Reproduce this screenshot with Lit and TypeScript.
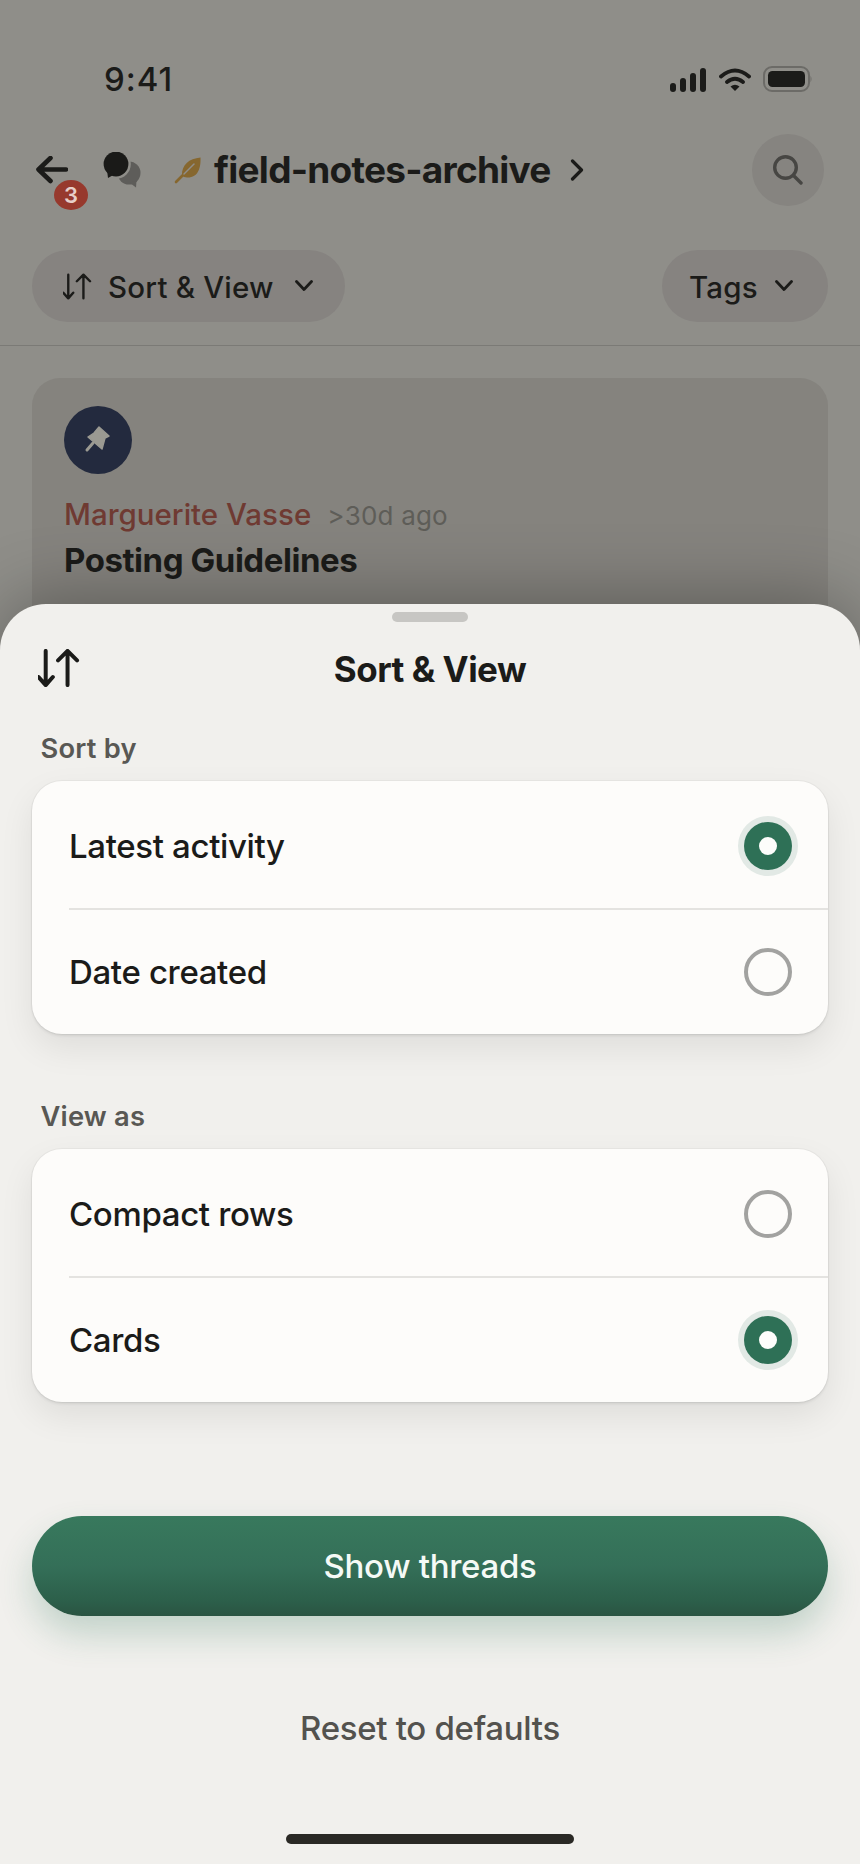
import { LitElement, html, css } from "lit";
import { customElement } from "lit/decorators.js";

const chevDown = html`<svg class="chev" viewBox="0 0 18 12" width="18" height="12"><path d="M1.5 1.5 9 9.5l7.5-8" fill="none" stroke="currentColor" stroke-width="2.8" stroke-linecap="round" stroke-linejoin="round"/></svg>`;

const sortIcon = (w: number, h: number, sw: number) => html`<svg viewBox="0 0 44 40" width=${w} height=${h}>
  <path d="M8 2v36M0.500 29.500 8 38l7.500-8.500M31 38V2M21 12 31 2l10 10" fill="none" stroke="currentColor" stroke-width=${sw} stroke-linecap="round" stroke-linejoin="round"/>
</svg>`;

@customElement("app-root")
export class AppRoot extends LitElement {
  static styles = css`
    :host {
      display: block;
      position: relative;
      width: 860px;
      height: 1864px;
      overflow: hidden;
      background: #8f8e89;
      font-family: Inter, "Liberation Sans", sans-serif;
      color: #1b1b19;
    }
    svg { display: block; flex: none; }
    .status {
      height: 60px;
      padding: 50px 47px 0 104px;
      display: flex;
      justify-content: space-between;
      align-items: center;
    }
    .time { font-size: 33px; font-weight: 550; letter-spacing: 1px; line-height: 60px; margin-top: -2px; }
    .status-icons { display: flex; align-items: flex-start; height: 30px; margin-top: 2px; }
    .signal { margin-right: 13px; margin-top: 2px; }
    .wifi { margin-right: 12px; margin-top: 2px; }
    .nav {
      margin-top: 24px;
      height: 72px;
      padding: 0 36px;
      display: flex;
      align-items: center;
    }
    .back { position: relative; width: 32px; height: 28px; margin-right: 35px; }
    .badge {
      position: absolute;
      left: 18px;
      top: 24px;
      width: 34px;
      height: 30px;
      border-radius: 50%;
      background: #97392d;
      color: #e7cfc9;
      font-size: 22px;
      font-weight: 600;
      line-height: 30px;
      text-align: center;
    }
    .bubbles { margin-right: 31px; }
    .leaf { margin-right: 12px; }
    .repo { font-size: 37px; font-weight: 650; letter-spacing: -0.75px; line-height: 44px; margin-right: 19px; }
    .search {
      margin-left: auto;
      width: 72px;
      height: 72px;
      border-radius: 50%;
      background: #868480;
      display: flex;
      align-items: center;
      justify-content: center;
    }
    .filters {
      margin-top: 44px;
      padding: 0 32px;
      display: flex;
      justify-content: space-between;
    }
    .chip {
      height: 72px;
      border-radius: 36px;
      background: #868380;
      display: flex;
      align-items: center;
      font-size: 29.500px;
      font-weight: 550;
      letter-spacing: 0.2px;
      line-height: 38px;
    }
    .chip .label { padding-top: 2px; }
    .chip.sort { width: 313px; padding-left: 31px; box-sizing: border-box; }
    .chip.sort .label { margin-left: 16px; margin-right: 21px; }
    .chip.tags { width: 166px; padding-left: 27px; box-sizing: border-box; }
    .chip.tags .label { margin-right: 17px; }
    .rule { margin-top: 23px; height: 1px; background: #7b7a76; }
    .thread {
      margin: 32px 32px 0;
      height: 300px;
      box-sizing: border-box;
      padding: 28px 32px;
      border-radius: 28px;
      background: #85837e;
    }
    .avatar {
      width: 68px;
      height: 68px;
      border-radius: 50%;
      background: #232a3e;
    }
    .meta { margin-top: 22px; display: flex; align-items: baseline; line-height: 36px; }
    .author { font-size: 29.500px; font-weight: 500; color: #6f3a32; margin-right: 16px; }
    .ago { font-size: 26px; font-weight: 400; color: #5e5d58; letter-spacing: 0.2px; }
    .title { font-size: 33px; font-weight: 650; line-height: 40px; margin-top: 6px; letter-spacing: -0.45px; }
    .sheet {
      position: absolute;
      left: 0;
      right: 0;
      top: 604px;
      bottom: 0;
      background: #f1f0ed;
      border-radius: 46px 46px 0 0;
      box-shadow: 0 -6px 70px rgba(0, 0, 0, 0.3);
      display: flex;
      flex-direction: column;
    }
    .grab { width: 76px; height: 10px; border-radius: 5px; background: #c7c6c3; margin: 8px auto 0; }
    .sheet-head { position: relative; height: 44px; margin-top: 25px; text-align: center; }
    .sheet-icon { position: absolute; left: 38px; top: 2px; }
    .sheet-title { font-size: 35px; font-weight: 650; line-height: 44px; letter-spacing: -0.5px; }
    .section {
      font-size: 27.300px;
      font-weight: 570;
      line-height: 34px;
      color: #595854;
      margin: 41px 0 15px 40.500px;
      letter-spacing: 0.2px;
    }
    .section.second { margin-top: 66px; margin-bottom: 15px; }
    .card {
      margin: 0 32px;
      background: #fdfcfa;
      border-radius: 30px;
      box-shadow: 0 0 0 1px rgba(0, 0, 0, 0.035), 0 14px 34px rgba(0, 0, 0, 0.08), 0 2px 3px rgba(0, 0, 0, 0.08);
    }
    .row {
      box-sizing: border-box;
      height: 127px;
      padding: 2px 36px 0 37px;
      display: flex;
      align-items: center;
      justify-content: space-between;
      font-size: 33px;
      font-weight: 500;
      letter-spacing: -0.35px;
    }
    .divider + .row { height: 124px; padding-top: 0; }
    .divider { height: 2px; margin-left: 37px; background: #e4e3e0; }
    .radio { width: 48px; height: 48px; box-sizing: border-box; border-radius: 50%; border: 4px solid #a2a2a0; }
    .radio.on {
      border: none;
      background: #2e7056;
      box-shadow: 0 0 0 6px #e2e9e5;
      display: flex;
      align-items: center;
      justify-content: center;
    }
    .dot { width: 18px; height: 18px; border-radius: 50%; background: #fdfdfb; }
    .cta {
      margin: 114px 32px 0;
      height: 100px;
      border-radius: 50px;
      background: linear-gradient(180deg, #38795d 0%, #346f58 50%, #2c5f4a 85%, #2a5442 100%);
      box-shadow: 0 18px 34px rgba(47, 115, 88, 0.24);
      color: #f5faf6;
      font-size: 33px;
      font-weight: 550;
      letter-spacing: -0.3px;
      display: flex;
      align-items: center;
      justify-content: center;
    }
    .reset {
      margin-top: 92px;
      text-align: center;
      font-size: 33px;
      font-weight: 550;
      line-height: 40px;
      color: #53524e;
      letter-spacing: -0.3px;
    }
    .home {
      position: absolute;
      left: 286px;
      bottom: 20px;
      width: 288px;
      height: 10px;
      border-radius: 5px;
      background: #2a2925;
    }
  `;

  private radio(on: boolean) {
    return on
      ? html`<div class="radio on"><div class="dot"></div></div>`
      : html`<div class="radio"></div>`;
  }

  render() {
    return html`
      <div class="status">
        <span class="time">9:41</span>
        <div class="status-icons">
          <svg class="signal" width="36" height="26" viewBox="0 0 36 26">
            <rect x="0" y="15" width="6" height="9" rx="3" fill="#1b1b19"/>
            <rect x="10" y="10" width="6" height="14" rx="3" fill="#1b1b19"/>
            <rect x="20" y="5" width="6" height="19" rx="3" fill="#1b1b19"/>
            <rect x="30" y="0" width="6" height="24" rx="3" fill="#1b1b19"/>
          </svg>
          <svg class="wifi" width="32" height="24" viewBox="0 0 32 24">
            <path d="M2 8.500Q16-3.500 30 8.500M8 14Q16 7.500 24 14" fill="none" stroke="#1b1b19" stroke-width="3.800" stroke-linecap="round"/>
            <path d="M11.500 18.500Q16 15 20.500 18.500L16 23Z" fill="#1b1b19"/>
          </svg>
          <svg width="50" height="28" viewBox="0 0 50 28">
            <rect x="1" y="1" width="45" height="24" rx="8" fill="none" stroke="#6c6b67" stroke-width="2"/>
            <rect x="5" y="5" width="37" height="16" rx="4.500" fill="#1b1b19"/>
            <path d="M47.500 9.500q2 3.500 0 7z" fill="#6c6b67"/>
          </svg>
        </div>
      </div>

      <div class="nav">
        <div class="back">
          <svg width="32" height="28" viewBox="0 0 32 28">
            <path d="M30 13.500H3M14.500 2 2.500 13.500 14.500 25" fill="none" stroke="#1b1b19" stroke-width="4.600" stroke-linecap="round" stroke-linejoin="round"/>
          </svg>
          <div class="badge">3</div>
        </div>
        <svg class="bubbles" width="40" height="36" viewBox="0 0 40 36">
          <circle cx="26" cy="21" r="11.500" fill="#5e5d5a"/>
          <path d="M27 31l6 4.500.500-7z" fill="#5e5d5a"/>
          <circle cx="13" cy="12" r="14.800" fill="#8f8e89"/>
          <circle cx="13" cy="12" r="12.400" fill="#1a1a18"/>
          <path d="M4 18l1 8 7-4z" fill="#1a1a18"/>
        </svg>
        <svg class="leaf" width="28" height="28" viewBox="0 0 28 28">
          <path d="M26.500 1.500C27 12 24 22 13 21.500c-2 0-4-.800-5-2C7.500 9 15 2.500 26.500 1.500z" fill="#86672f"/>
          <path d="M2 26 20 8" fill="none" stroke="#86672f" stroke-width="2.600" stroke-linecap="round"/>
          <path d="M10 18 20 8" fill="none" stroke="#8f8e89" stroke-width="1.400" stroke-linecap="round"/>
        </svg>
        <span class="repo">field-notes-archive</span>
        <svg width="14" height="22" viewBox="0 0 14 22">
          <path d="M2.500 2 11.500 11 2.500 20" fill="none" stroke="#1b1b19" stroke-width="3.200" stroke-linecap="round" stroke-linejoin="round"/>
        </svg>
        <div class="search">
          <svg width="30" height="30" viewBox="0 0 30 30">
            <circle cx="12.500" cy="12.500" r="10.800" fill="none" stroke="#474643" stroke-width="3.400"/>
            <path d="M20.500 20.500 28 28" stroke="#474643" stroke-width="3.400" stroke-linecap="round"/>
          </svg>
        </div>
      </div>

      <div class="filters">
        <div class="chip sort">
          ${sortIcon(29, 27, 3.6)}
          <span class="label">Sort &amp; View</span>
          ${chevDown}
        </div>
        <div class="chip tags">
          <span class="label">Tags</span>
          ${chevDown}
        </div>
      </div>
      <div class="rule"></div>

      <div class="thread">
        <div class="avatar">
          <svg width="68" height="68" viewBox="0 0 68 68">
            <path d="M35 21l10 9-4 2-3 11-14-12 6-4z" fill="#9b9a92" stroke="#9b9a92" stroke-width="1.500" stroke-linejoin="round"/>
            <path d="M29 37l-6 7" stroke="#9b9a92" stroke-width="3" stroke-linecap="round"/>
          </svg>
        </div>
        <div class="meta">
          <span class="author">Marguerite Vasse</span>
          <span class="ago">&gt;30d ago</span>
        </div>
        <div class="title">Posting Guidelines</div>
      </div>

      <div class="sheet">
        <div class="grab"></div>
        <div class="sheet-head">
          <div class="sheet-icon">${sortIcon(42, 38, 4.2)}</div>
          <div class="sheet-title">Sort &amp; View</div>
        </div>
        <div class="section">Sort by</div>
        <div class="card">
          <div class="row"><span>Latest activity</span>${this.radio(true)}</div>
          <div class="divider"></div>
          <div class="row"><span>Date created</span>${this.radio(false)}</div>
        </div>
        <div class="section second">View as</div>
        <div class="card">
          <div class="row"><span>Compact rows</span>${this.radio(false)}</div>
          <div class="divider"></div>
          <div class="row"><span>Cards</span>${this.radio(true)}</div>
        </div>
        <div class="cta">Show threads</div>
        <div class="reset">Reset to defaults</div>
        <div class="home"></div>
      </div>
    `;
  }
}
